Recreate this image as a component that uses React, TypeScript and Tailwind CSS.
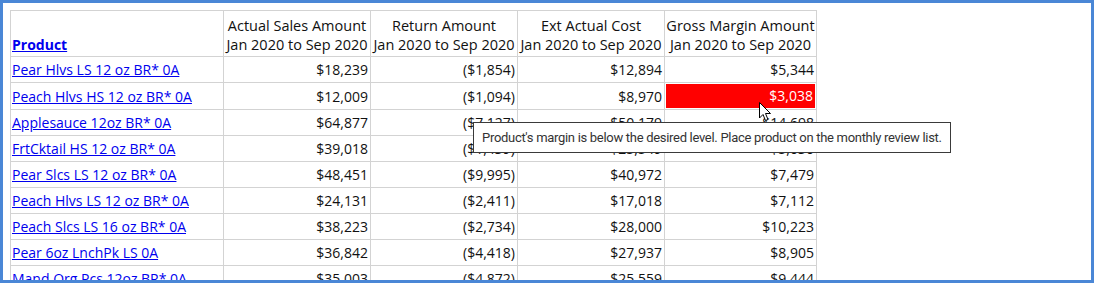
import React from "react";

const rows = [
  { name: "Pear Hlvs LS 12 oz BR* 0A", sales: "$18,239", ret: "($1,854)", cost: "$12,894", margin: "$5,344" },
  { name: "Peach Hlvs HS 12 oz BR* 0A", sales: "$12,009", ret: "($1,094)", cost: "$8,970", margin: "$3,038", low: true },
  { name: "Applesauce 12oz BR* 0A", sales: "$64,877", ret: "($7,127)", cost: "$50,179", margin: "$14,698" },
  { name: "FrtCktail HS 12 oz BR* 0A", sales: "$39,018", ret: "($1,439)", cost: "$25,549", margin: "$5,030" },
  { name: "Pear Slcs LS 12 oz BR* 0A", sales: "$48,451", ret: "($9,995)", cost: "$40,972", margin: "$7,479" },
  { name: "Peach Hlvs LS 12 oz BR* 0A", sales: "$24,131", ret: "($2,411)", cost: "$17,018", margin: "$7,112" },
  { name: "Peach Slcs LS 16 oz BR* 0A", sales: "$38,223", ret: "($2,734)", cost: "$28,000", margin: "$10,223" },
  { name: "Pear 6oz LnchPk LS 0A", sales: "$36,842", ret: "($4,418)", cost: "$27,937", margin: "$8,905" },
  { name: "Mand Org Pcs 12oz BR* 0A", sales: "$35,003", ret: "($4,872)", cost: "$25,559", margin: "$9,444" },
];

const headers = ["Actual Sales Amount", "Return Amount", "Ext Actual Cost", "Gross Margin Amount"];

export default function App() {
  return (
    <div
      className="relative w-[1094px] h-[283px] overflow-hidden border-[3px] border-[#4a87d6] bg-white pt-[7px] pl-[7px] text-[14px] text-[#111]"
      style={{ fontFamily: '"Open Sans", "Noto Sans", sans-serif' }}
    >
      <table className="border-collapse">
        <colgroup>
          <col className="w-[213px]" />
          <col className="w-[147px]" />
          <col className="w-[147px]" />
          <col className="w-[147px]" />
          <col className="w-[152px]" />
        </colgroup>
        <thead>
          <tr className="h-[46px]">
            <th className="border border-[#d3d3d3] px-[1px] pb-[1px] text-left align-bottom">
              <a href="#" className="font-bold text-[#0000ee] underline">Product</a>
            </th>
            {headers.map((h) => (
              <th key={h} className="border border-[#d3d3d3] px-0 pt-[2px] text-center font-normal text-[14.5px] leading-[19px] whitespace-nowrap">
                {h}
                <br />
                Jan 2020 to Sep 2020
              </th>
            ))}
          </tr>
        </thead>
        <tbody>
          {rows.map((r) => (
            <tr key={r.name} className="h-[26px]">
              <td className="border border-[#d3d3d3] px-[1px] whitespace-nowrap">
                <a href="#" className="text-[#0000ee] underline">{r.name}</a>
              </td>
              <td className="border border-[#d3d3d3] pr-[2px] text-right">{r.sales}</td>
              <td className="border border-[#d3d3d3] pr-[2px] text-right">{r.ret}</td>
              <td className="border border-[#d3d3d3] pr-[2px] text-right">{r.cost}</td>
              <td className="border border-[#d3d3d3] p-[1px]">
                <div className={r.low ? "h-[24px] bg-[#ff0000] pr-[2px] text-right leading-[24px] text-white" : "pr-[1px] text-right"}>
                  {r.margin}
                </div>
              </td>
            </tr>
          ))}
        </tbody>
      </table>

      {/* Tooltip over the grid */}
      <div
        className="absolute left-[470px] top-[119px] h-[31px] w-[478px] border border-[#3a3a3a] bg-white px-[8px] text-[13px] tracking-[-0.3px] leading-[29px] text-[#333] whitespace-nowrap"
        style={{ fontFamily: "Roboto, sans-serif" }}
      >
        Product's margin is below the desired level. Place product on the monthly review list.
      </div>

      {/* Mouse pointer */}
      <svg className="absolute left-[756px] top-[99px]" width="13" height="20" viewBox="0 0 13 20">
        <path d="M0.5 0.5 L0.5 16 L4 12.5 L6.5 18.5 L9 17.5 L6.5 11.5 L11.5 11.5 Z" fill="white" stroke="black" strokeWidth="1" strokeLinejoin="round" />
      </svg>
    </div>
  );
}
